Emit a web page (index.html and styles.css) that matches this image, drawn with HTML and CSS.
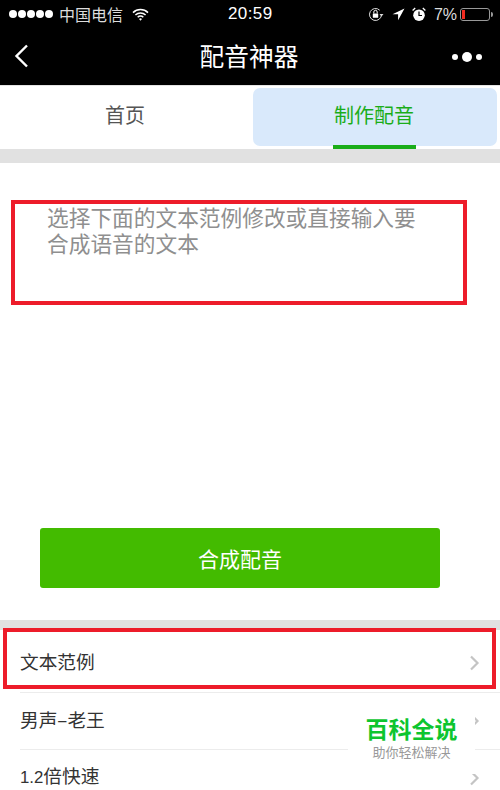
FILE: index.html
```html
<!DOCTYPE html>
<html lang="zh">
<head>
<meta charset="utf-8">
<title>配音神器</title>
<link rel="stylesheet" href="styles.css">
</head>
<body>
<div class="page">
  <header class="top">
    <div class="status">
      <div class="status-left">
        <span class="dots"><i></i><i></i><i></i><i></i><i></i></span>
        <span class="carrier">中国电信</span>
        <svg class="wifi" width="17" height="13" viewBox="0 0 17 13"><path d="M1 4.6a10.6 10.6 0 0 1 15 0M3.4 7a7.2 7.2 0 0 1 10.2 0M5.7 9.3a3.9 3.9 0 0 1 5.6 0" fill="none" stroke="#fff" stroke-width="1.5"/><path d="M8.5 12.8l-1.5-1.8a2.2 2.2 0 0 1 3 0z" fill="#fff"/></svg>
      </div>
      <span class="clock">20:59</span>
      <div class="status-right">
        <svg width="16" height="15" viewBox="0 0 16 15"><path d="M13.5 7.5a6 6 0 1 1-1.8-4.3" fill="none" stroke="#ddd" stroke-width="1"/><path d="M11.5 7h4l-2 2.4z" fill="#ddd"/><rect x="4.8" y="6.5" width="5.4" height="4.3" rx=".5" fill="#fff"/><path d="M5.8 6.5V5a1.7 1.7 0 0 1 3.4 0v1.5" fill="none" stroke="#fff"/></svg>
        <svg class="arrow" width="13" height="13" viewBox="0 0 13 13"><path d="M12.5 .5L.5 6.2h5.6v6z" fill="#fff"/></svg>
        <svg class="alarm" width="14" height="15" viewBox="0 0 14 15"><circle cx="7" cy="8.2" r="5.8" fill="#fff"/><path d="M7 4.5v4h3" fill="none" stroke="#000" stroke-width="1.2"/><path d="M.6 3.4L3.2 1M13.4 3.4L10.8 1" stroke="#fff" stroke-width="1.3"/></svg>
        <span class="pct">7%</span>
        <span class="battery"><span class="charge"></span></span><span class="nub"></span>
      </div>
    </div>
    <div class="nav">
      <svg class="back" width="15" height="24" viewBox="0 0 15 24"><path d="M13 1.5L2.5 12 13 22.5" fill="none" stroke="#fff" stroke-width="2.4"/></svg>
      <h1 class="title">配音神器</h1>
      <span class="more"><i></i><b></b><i></i></span>
    </div>
  </header>

  <nav class="tabs">
    <div class="tab">首页</div>
    <div class="tab tab-active"><span class="tab-pill">制作配音</span><span class="tab-line"></span></div>
  </nav>
  <div class="band"></div>

  <section class="editor">
    <p class="placeholder">选择下面的文本范例修改或直接输入要<br>合成语音的文本</p>
    <span class="mark mark-input"></span>
  </section>

  <div class="action"><button class="submit">合成配音</button></div>
  <div class="band band-thin"></div>

  <ul class="list">
    <li class="row"><span class="label">文本范例</span><svg class="chev" width="11" height="16" viewBox="0 0 11 16"><path d="M2 1.5L8.5 8 2 14.5" fill="none" stroke="#c4c4c4" stroke-width="2.2"/></svg></li>
    <li class="row"><span class="label">男声–老王</span><svg class="chev" width="11" height="16" viewBox="0 0 11 16"><path d="M2 1.5L8.5 8 2 14.5" fill="none" stroke="#c4c4c4" stroke-width="2.2"/></svg></li>
    <li class="row"><span class="label"><span class="num">1.2</span>倍快速</span><svg class="chev" width="11" height="16" viewBox="0 0 11 16"><path d="M2 1.5L8.5 8 2 14.5" fill="none" stroke="#c4c4c4" stroke-width="2.2"/></svg></li>
  </ul>
  <span class="mark mark-row"></span>

  <div class="watermark">
    <div class="wm-title">百科全说</div>
    <div class="wm-sub">助你轻松解决</div>
  </div>
</div>
</body>
</html>
```

FILE: styles.css
```css
* { box-sizing: border-box; }
html, body { margin: 0; padding: 0; }
body { background: #fff; font-family: "Noto Sans CJK SC", "Liberation Sans", sans-serif; }
.page { position: relative; width: 500px; height: 790px; overflow: hidden; background: #fff; }

.top { height: 85px; background: #000; color: #fff; }
.status { position: relative; height: 28px; display: flex; align-items: center; justify-content: space-between; padding: 0 7px 0 9px; }
.status-left { display: flex; align-items: center; }
.dots { display: flex; gap: 1px; }
.dots i { width: 8px; height: 8px; border-radius: 50%; background: #fff; }
.carrier { margin-left: 6px; font-size: 16px; color: #ddd; line-height: 20px; }
.wifi { margin-left: 9px; }
.clock { position: absolute; left: 228px; top: 3px; font-family: "Liberation Sans", sans-serif; font-size: 17px; line-height: 22px; letter-spacing: .4px; color: #fff; }
.status-right { display: flex; align-items: center; }
.status-right svg { display: block; }
.arrow { margin-left: 8px; }
.alarm { margin-left: 7px; }
.pct { margin-left: 8px; font-family: "Liberation Sans", sans-serif; font-size: 16px; line-height: 20px; color: #ddd; padding-top: 1px; }
.battery { margin-left: 3px; width: 30px; height: 13px; border: 1px solid #999; border-radius: 3px; padding: 1px; display: block; }
.charge { display: block; width: 3px; height: 9px; background: #f02b20; }
.nub { width: 2px; height: 5px; margin-left: 1px; background: #999; border-radius: 0 2px 2px 0; }

.nav { position: relative; height: 57px; display: flex; align-items: center; justify-content: center; }
.back { position: absolute; left: 14px; top: 16px; }
.title { margin: 0 2px 4px 0; font-size: 24.7px; line-height: 30px; font-weight: 400; color: #fff; }
.more { position: absolute; left: 452px; top: 24px; display: flex; align-items: center; gap: 4px; }
.more i { width: 6px; height: 6px; border-radius: 50%; background: #fff; }
.more b { width: 10px; height: 10px; border-radius: 50%; background: #fff; }

.tabs { height: 64px; padding-top: 1px; display: grid; grid-template-columns: 1fr 1fr; background: #fff; border-top: 1px solid #e4e4e4; }
.tab { position: relative; display: flex; align-items: center; justify-content: center; font-size: 20px; color: #555; padding-bottom: 7px; }
.tab-active { color: #1aad19; }
.tab-pill { position: absolute; left: 3px; right: 3px; top: 1px; bottom: 3px; display: flex; align-items: center; justify-content: center; background: #d9e9fb; border-radius: 7px; padding-bottom: 5px; padding-right: 2px; }
.tab-line { position: absolute; left: 83px; top: 58px; width: 83px; height: 4px; background: #1aad19; }

.band { height: 14px; background: #e1e1e1; }
.band-thin { height: 10px; }

.editor { height: 365px; padding: 41px 47px 0; }
.placeholder { margin: 0; font-size: 21.7px; line-height: 26px; color: #8f8f8f; }

.mark { position: absolute; border: 4px solid #ed1c2a; display: block; pointer-events: none; }
.mark-input { left: 11px; top: 200px; width: 456px; height: 105px; }
.mark-row { left: 3px; top: 628px; width: 493px; height: 61px; }

.action { height: 92px; padding: 0 60px 0 40px; }
.submit { display: block; width: 100%; height: 60px; margin: 0; border: 0; border-radius: 3px; background: #43bb00; color: #fff; font: inherit; font-size: 21px; }

.list { list-style: none; margin: 0; padding: 5px 0 0 20px; }
.row { height: 57.5px; padding-right: 20px; display: flex; align-items: center; justify-content: space-between; font-size: 18.7px; color: #333; border-bottom: 1px solid #ececec; }
.label { line-height: 24px; margin-bottom: 4px; }
.num { font-family: "Liberation Sans", sans-serif; font-size: 16.8px; }

.watermark { position: absolute; left: 348px; top: 710px; width: 127px; height: 64px; background: #fff; text-align: center; }
.wm-title { font-size: 23px; line-height: 28px; font-weight: 700; color: #0dc52f; margin-top: 4px; }
.wm-sub { font-size: 13px; line-height: 18px; color: #999; margin-top: 1px; }
```
